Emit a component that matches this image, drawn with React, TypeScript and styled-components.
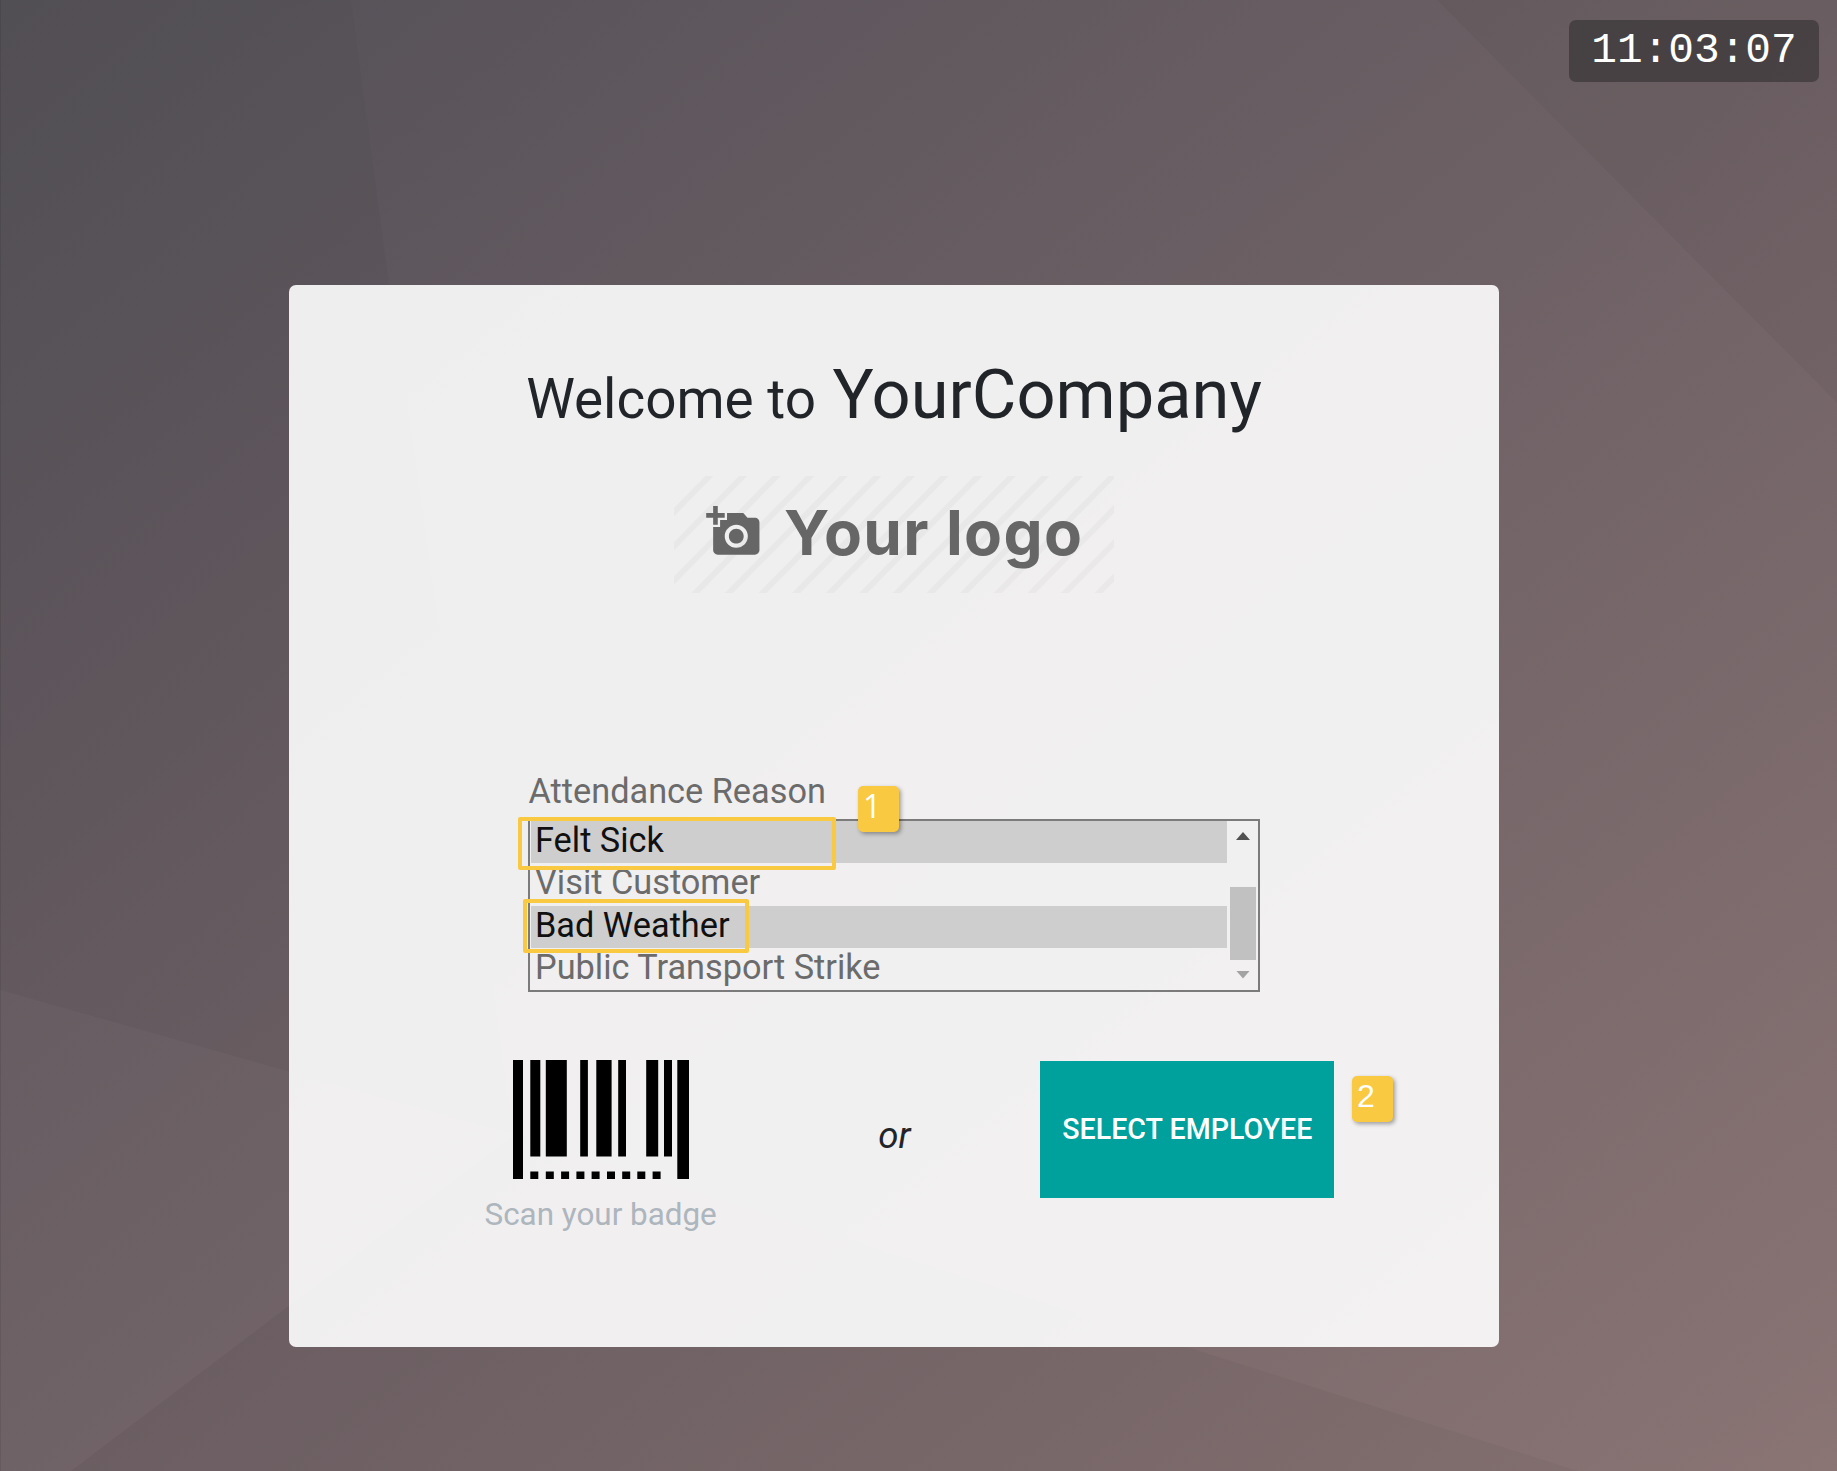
import React from 'react';
import styled, { createGlobalStyle } from 'styled-components';

const GlobalStyle = createGlobalStyle`
  *, *::before, *::after { box-sizing: border-box; }
  body {
    margin: 0;
    color: #212529;
    font-family: Roboto, "Liberation Sans", sans-serif;
  }
`;

const Screen = styled.div`
  position: relative;
  width: 100%;
  height: 1471px;
  padding: 285px 0 0 289px;
  overflow: hidden;
  background: linear-gradient(to right bottom, #535057 0%, #6e6165 50%, #8a7474 100%);
`;

const Backdrop = styled.svg`
  position: absolute;
  inset: 0;
  display: block;
`;

const Clock = styled.div`
  position: absolute;
  top: 20px;
  right: 18px;
  width: 250px;
  height: 62px;
  border-radius: 7px;
  background: rgba(18, 20, 20, 0.38);
  color: #fff;
  font: 42.8px/62px "Liberation Mono", monospace;
  text-align: center;
`;

const Card = styled.main`
  position: relative;
  display: flex;
  flex-direction: column;
  align-items: center;
  width: 1210px;
  height: 1062px;
  padding-top: 69px;
  border-radius: 7px;
  background: rgba(255, 255, 255, 0.9);
`;

const Title = styled.h1`
  display: flex;
  align-items: baseline;
  gap: 16.5px;
  height: 82px;
  margin: 0;
  font-size: 54.9px;
  font-weight: 400;
  line-height: 82px;
  white-space: nowrap;
`;

const Company = styled.span`
  font-size: 68.6px;
`;

const Logo = styled.svg`
  display: block;
  flex: none;
  margin: 40px 0 178px;
`;

const Field = styled.section`
  width: 732px;
`;

const Label = styled.div`
  height: 41px;
  margin-bottom: 7px;
  padding-left: 0.5px;
  color: #6b6b6b;
  font-size: 34.3px;
  line-height: 41px;
`;

const ListWrap = styled.div`
  position: relative;
`;

const ListBox = styled.div`
  display: flex;
  height: 173px;
  border: 2px solid #7b7b7b;
`;

const Options = styled.div`
  flex: 1;
  padding-left: 1px;
`;

const Option = styled.div<{ $selected?: boolean }>`
  height: 42.25px;
  padding-left: 4px;
  background: ${(p) => (p.$selected ? '#cecece' : 'transparent')};
  color: ${(p) => (p.$selected ? '#101010' : '#6b6b6b')};
  font-size: 34.3px;
  line-height: 38px;
  white-space: nowrap;
`;

const ScrollBar = styled.div`
  display: flex;
  flex-direction: column;
  align-items: center;
  width: 31px;
  padding: 11px 0 11.5px;
`;

const Arrow = styled.div<{ $dir: 'up' | 'down' }>`
  width: 14px;
  height: 8px;
  margin-left: 1px;
  background: ${(p) => (p.$dir === 'up' ? '#505050' : '#a3a3a3')};
  clip-path: ${(p) =>
    p.$dir === 'up' ? 'polygon(50% 0, 100% 100%, 0 100%)' : 'polygon(0 0, 100% 0, 50% 100%)'};
`;

const Thumb = styled.div`
  width: 26px;
  height: 73.5px;
  margin: 46.5px 0 auto;
  background: #c1c1c1;
`;

const Highlight = styled.div<{ $x: number; $y: number; $w: number; $h: number }>`
  position: absolute;
  left: ${(p) => p.$x}px;
  top: ${(p) => p.$y}px;
  width: ${(p) => p.$w}px;
  height: ${(p) => p.$h}px;
  border: 4px solid #f8c941;
  border-radius: 2px;
`;

const Marker = styled.div<{ $x: number; $y: number; $font: string }>`
  position: absolute;
  left: ${(p) => p.$x}px;
  top: ${(p) => p.$y}px;
  width: 41px;
  height: 46px;
  padding-left: 5px;
  border-radius: 5px;
  background: #f8c941;
  box-shadow: 2px 2px 4px rgba(0, 0, 0, 0.35);
  color: #fff;
  font: 32px/40px ${(p) => p.$font}, sans-serif;
`;

const Actions = styled.section`
  display: grid;
  grid-template-columns: 293.3px 293.3px 294.4px;
  align-items: start;
  margin-top: 67.7px;
`;

const Badge = styled.div`
  display: flex;
  flex-direction: column;
  align-items: center;
  gap: 17px;
  padding-left: 1px;
  color: #adb5bd;
  font-size: 31.4px;
  line-height: 38px;
`;

const Barcode = styled.svg`
  display: block;
  margin-left: 1px;
`;

const Or = styled.em`
  padding: 54.5px 0 0 2px;
  font-size: 36.6px;
  line-height: 44px;
  text-align: center;
`;

const ButtonWrap = styled.div`
  position: relative;
  padding-top: 1.3px;
`;

const Button = styled.button`
  display: block;
  width: 100%;
  height: 137px;
  padding: 0;
  border: 0;
  background: #00a09d;
  color: #fff;
  font: 500 28.6px/34px Roboto, sans-serif;
`;

const bars: [number, number][] = [
  [17.3, 10], [32.8, 21], [67.2, 7.7], [83.3, 15.3], [105.2, 7.8], [133.2, 12], [151, 8],
];
const dots = [17.3, 32.8, 48.1, 63.4, 78.6, 94, 109.2, 124.3, 139.6];
const stripes = Array.from({ length: 17 }, (_, i) => 35.5 + i * 33.6);

export default function App() {
  return (
    <Screen>
      <GlobalStyle />
      <Backdrop width="1837" height="1471" viewBox="0 0 1837 1471" aria-hidden="true">
        <path d="M0 0H351L389 283L514 1135L0 990Z" fill="#000" opacity=".022" />
        <path d="M1437 0H1837V403Z" fill="#000" opacity=".03" />
        <path d="M0 990L514 1135L71 1471H0Z" fill="#fff" opacity=".012" />
        <path d="M71 1471L514 1135L1187 1347L1578 1471Z" fill="#000" opacity=".035" />
        <path d="M0 0H1V1471H0Z" fill="#000" opacity=".08" />
      </Backdrop>
      <Clock>11:03:07</Clock>
      <Card>
        <Title>
          <span>Welcome to</span>
          <Company>YourCompany</Company>
        </Title>
        <Logo width="440" height="117" viewBox="0 0 440 117">
          <g fill="#000" opacity=".022">
            {stripes.map((x) => (
              <path key={x} d={`M${x - 4} 0h8l-115 117h-8Z`} />
            ))}
          </g>
          <path
            transform="translate(32.2 27.8) scale(2.315)"
            fill="#666"
            d="M3 4V1h2v3h3v2H5v3H3V6H0V4h3zm3 6V7h3V4h7l1.83 2H21c1.1 0 2 .9 2 2v12c0 1.1-.9 2-2 2H5c-1.1 0-2-.9-2-2V10h3zm7 9c2.76 0 5-2.24 5-5s-2.24-5-5-5-5 2.24-5 5 2.24 5 5 5zm-3.2-5c0 1.77 1.43 3.2 3.2 3.2s3.2-1.43 3.2-3.2-1.43-3.2-3.2-3.2-3.2 1.43-3.2 3.2z"
          />
          <text
            x="110"
            y="79"
            fill="#666"
            fontFamily="Inter, sans-serif"
            fontWeight="700"
            fontSize="62"
            textLength="298"
          >
            Your logo
          </text>
        </Logo>
        <Field>
          <Label>Attendance Reason</Label>
          <ListWrap>
            <ListBox>
              <Options>
                <Option $selected>Felt Sick</Option>
                <Option>Visit Customer</Option>
                <Option $selected>Bad Weather</Option>
                <Option>Public Transport Strike</Option>
              </Options>
              <ScrollBar>
                <Arrow $dir="up" />
                <Thumb />
                <Arrow $dir="down" />
              </ScrollBar>
            </ListBox>
            <Highlight $x={-10} $y={-2} $w={318} $h={53} />
            <Highlight $x={-5} $y={80} $w={226} $h={54} />
            <Marker $x={330} $y={-33} $font='"Open Sans"'>1</Marker>
          </ListWrap>
        </Field>
        <Actions>
          <Badge>
            <Barcode width="176.5" height="119.5" viewBox="0 0 176.5 119.5">
              <path d="M0 0h10v119.5H0ZM164.3 0h12.2v119.5h-12.2Z" />
              {bars.map(([x, w]) => (
                <rect key={x} x={x} width={w} height="96.5" />
              ))}
              {dots.map((x) => (
                <rect key={x} x={x} y="111.5" width="8" height="8" />
              ))}
            </Barcode>
            <span>Scan your badge</span>
          </Badge>
          <Or>or</Or>
          <ButtonWrap>
            <Button>SELECT EMPLOYEE</Button>
            <Marker $x={312} $y={16.3} $font='"Liberation Sans"'>2</Marker>
          </ButtonWrap>
        </Actions>
      </Card>
    </Screen>
  );
}
